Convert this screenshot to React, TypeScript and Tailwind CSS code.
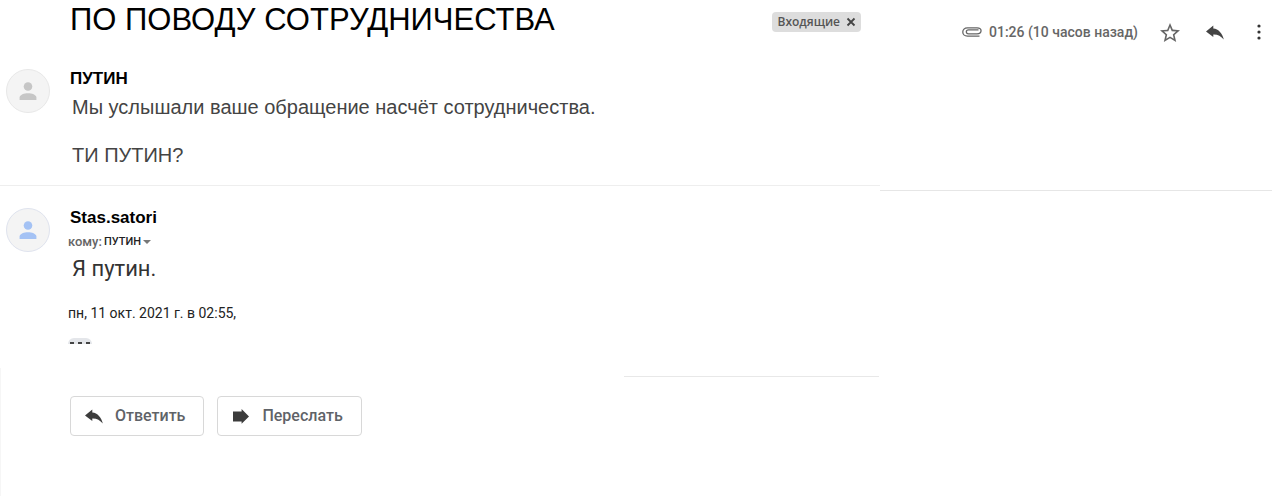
import type { ReactNode } from 'react';

function ReplyIcon({ className }: { className: string }) {
  return (
    <svg viewBox="0 0 18 15" className={className} fill="currentColor" aria-hidden="true">
      <path d="M7.3 0.5 0 6.4 7.3 12V9.4C11.5 9.2 15 10.8 17.8 14.6 16.4 8.6 12.6 4 7.3 3.6Z" />
    </svg>
  );
}

function ForwardIcon({ className }: { className: string }) {
  return (
    <svg viewBox="0 0 18 15" className={className} fill="currentColor" aria-hidden="true">
      <path d="M1 2.4H9.6V0L17 7.4 9.6 14.8V12.4H1Z" />
    </svg>
  );
}

function Avatar({ className }: { className: string }) {
  return (
    <div className={`size-11 shrink-0 rounded-full border bg-[#f4f4f4] flex items-center justify-center ${className}`}>
      <svg viewBox="0 0 18 18" className="size-[18px]" fill="currentColor" aria-hidden="true">
        <circle cx="9" cy="4.5" r="4.3" />
        <path d="M0.6 18V15.6C0.6 12.6 5.4 11.2 9 11.2S17.4 12.6 17.4 15.6V18Z" />
      </svg>
    </div>
  );
}

function Message({ avatar, children }: { avatar: string; children: ReactNode }) {
  return (
    <article className="flex gap-[18px] pl-1.5">
      <Avatar className={avatar} />
      <div className="min-w-0">{children}</div>
    </article>
  );
}

export default function App() {
  return (
    <main className="bg-white font-['Liberation_Sans',Arial,sans-serif] text-black">
      <header className="flex h-[69px] items-start">
        <div className="flex flex-1 items-start justify-between pl-[70px] pr-[19px]">
          <h1 className="text-[31px] leading-10">ПО ПОВОДУ СОТРУДНИЧЕСТВА</h1>
          <span className="mt-3 flex h-5 items-center gap-1.5 rounded bg-[#dddddd] px-[5px] font-['Open_Sans',sans-serif] text-xs font-semibold text-[#555555]">
            Входящие
            <button type="button" aria-label="Удалить ярлык">
              <svg viewBox="0 0 10 10" className="size-2.5" fill="none" stroke="#444444" strokeWidth="1.8">
                <path d="M1.5 1.5 8.5 8.5M8.5 1.5 1.5 8.5" />
              </svg>
            </button>
          </span>
        </div>
        <div className="flex h-16 w-[400px] shrink-0 items-center pl-[82px] pr-[19px] font-['Roboto',sans-serif] text-[#666666]">
          <svg viewBox="0 0 20 10" className="mr-[7px] h-2.5 w-5" fill="none" stroke="currentColor" strokeWidth="1.3" aria-hidden="true">
            <path d="M16.5 2.9H6.5C3.6 2.9 3.6 6.8 6.5 6.8H15C20.4 6.8 20.4 0.8 15 0.8H5.5C-0.8 0.8 -0.8 9.1 5.5 9.1H17.5" />
          </svg>
          <time className="whitespace-nowrap text-sm font-medium">01:26 (10 часов назад)</time>
          <div className="ml-auto flex items-center">
            <button type="button" aria-label="Пометить" className="mr-[26px]">
              <svg viewBox="2 2 20 19" className="h-[19px] w-5" fill="currentColor">
                <path d="M22 9.24l-7.19-.62L12 2 9.19 8.63 2 9.24l5.46 4.73L5.82 21 12 17.27 18.18 21l-1.63-7.03L22 9.24zM12 15.4l-3.76 2.27 1-4.28-3.32-2.88 4.38-.38L12 6.1l1.71 4.04 4.38.38-3.32 2.88 1 4.28L12 15.4z" />
              </svg>
            </button>
            <button type="button" aria-label="Ответить" className="mr-[33px] text-[#444444]">
              <ReplyIcon className="h-[15px] w-[18px]" />
            </button>
            <button type="button" aria-label="Ещё" className="text-[#333333]">
              <svg viewBox="0 0 4 16" className="h-4 w-1" fill="currentColor">
                <circle cx="2" cy="2" r="1.6" />
                <circle cx="2" cy="8" r="1.6" />
                <circle cx="2" cy="14" r="1.6" />
              </svg>
            </button>
          </div>
        </div>
      </header>

      <Message avatar="border-[#e8e8e8] text-[#c6c6c6]">
        <h2 className="pl-0.5 text-[17px] leading-5 font-bold">ПУТИН</h2>
        <div className="mt-1.5 pl-1 text-xl leading-6 text-[#444444]">
          <p>Мы услышали ваше обращение насчёт сотрудничества.</p>
          <p className="mt-6">ТИ ПУТИН?</p>
        </div>
      </Message>

      <div className="mt-[18px] flex items-start pr-2">
        <hr className="flex-1 border-[#eeeeee]" />
        <hr className="mt-[5px] w-[392px] border-[#e6e6e6]" />
      </div>

      <div className="mt-[17px]">
        <Message avatar="border-[#dfe3ee] text-[#a4c2f4]">
          <h2 className="pl-0.5 text-[17px] leading-5 font-bold">Stas.satori</h2>
          <button type="button" className="mt-1 flex h-5 items-center gap-0.5 font-['Roboto',sans-serif] text-[13px] text-[#666666]">
            <span className="font-medium">кому:</span>
            <span className="text-[11px] font-medium text-[#222222]">ПУТИН</span>
            <svg viewBox="0 0 8 4" className="h-1 w-2" fill="#777777">
              <path d="M0 0H8L4 4Z" />
            </svg>
          </button>
          <p className="mt-px pl-1 font-['Roboto',sans-serif] text-[22px] leading-8 text-[#333333]">Я путин.</p>
          <p className="mt-4 font-['Roboto',sans-serif] text-sm leading-6 text-[#222222]">пн, 11 окт. 2021 г. в 02:55,</p>
          <button type="button" aria-label="Показать скрытый текст" className="mt-[13px] flex h-1.5 w-6 items-end justify-center gap-1 rounded-t-full bg-[#e4e6ea]">
            <span className="h-0.5 w-1 bg-[#444444]" />
            <span className="h-0.5 w-1 bg-[#444444]" />
            <span className="h-0.5 w-1 bg-[#444444]" />
          </button>
        </Message>
      </div>

      <footer className="mt-6 min-h-32 border-l border-[#f6f6f6] pt-2">
        <div className="flex justify-end pr-[401px]">
          <hr className="w-[255px] border-[#e8e8e8]" />
        </div>
        <div className="mt-[19px] flex gap-[13px] pl-[69px] font-['Roboto',sans-serif] text-base font-medium text-[#5f6368]">
          <button type="button" className="flex h-10 items-center gap-3 rounded border border-[#d8d8d8] pl-3.5 pr-[18px]">
            <ReplyIcon className="h-[15px] w-[18px] text-[#3c3c3c]" />
            Ответить
          </button>
          <button type="button" className="flex h-10 items-center gap-3 rounded border border-[#d8d8d8] pl-3.5 pr-[18px]">
            <ForwardIcon className="h-[15px] w-[18px] text-[#3c3c3c]" />
            Переслать
          </button>
        </div>
      </footer>
    </main>
  );
}
